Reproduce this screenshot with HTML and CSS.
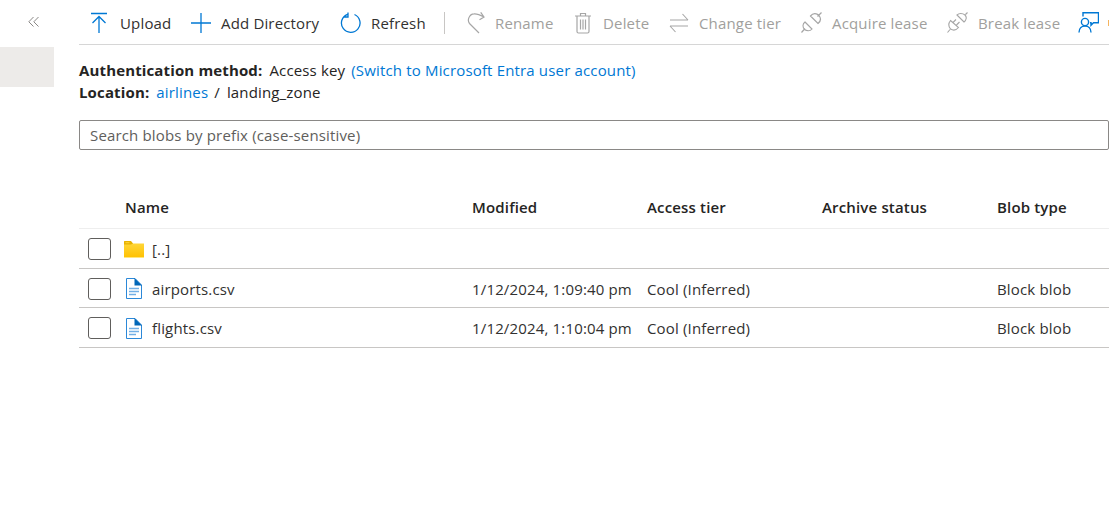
FILE: index.html
```html
<!DOCTYPE html>
<html lang="en">
<head>
<meta charset="utf-8">
<title>Blobs</title>
<link rel="stylesheet" href="styles.css">
</head>
<body>
<div class="page">
  <aside class="side">
    <div class="collapse"><svg width="12" height="12" viewBox="0 0 12 12"><path d="M5.500 1 .8 5.800l4.700 4.700M10.500 1 5.800 5.800l4.700 4.700" fill="none" stroke="#8a8886" stroke-width="1"/></svg></div>
    <div class="selected"></div>
  </aside>
  <main class="main">
    <div class="toolbar">
      <div class="tool t-upload"><svg width="18" height="22" viewBox="0 0 18 22"><path d="M1 1.500h16M9 21V4.500M2.500 11 9 4.500 15.500 11" fill="none" stroke="#0078d4" stroke-width="1.300"/></svg><span>Upload</span></div>
      <div class="tool t-add"><svg width="20" height="20" viewBox="0 0 20 20"><path d="M10 0v20M0 10h20" fill="none" stroke="#0078d4" stroke-width="1.300"/></svg><span>Add Directory</span></div>
      <div class="tool t-refresh"><svg width="22" height="22" viewBox="0 0 22 22"><path d="M7.500 2.300a9.300 9.300 0 1 0 7 .2M8 .5v4.500H3.500" fill="none" stroke="#0078d4" stroke-width="1.300"/></svg><span>Refresh</span></div>
      <div class="sep"></div>
      <div class="tool off t-rename"><svg width="20" height="22" viewBox="0 0 20 22"><path d="M13 21 3.500 11.500C1 8.500 3 2 8 1.800c4-.3 7 1.500 10 3.200M14.700.3 18 5l-4.500 2.700" fill="none" stroke="#a6a6a6" stroke-width="1.200"/></svg><span>Rename</span></div>
      <div class="tool off t-delete"><svg width="18" height="22" viewBox="0 0 18 22"><path d="M1 4h16M3 4v15.500a1.500 1.500 0 0 0 1.500 1.500h9a1.500 1.500 0 0 0 1.500-1.500V4M6.500 4V1.500h5V4M6.500 7.500v10M9 7.500v10M11.500 7.500v10" fill="none" stroke="#a6a6a6" stroke-width="1.200"/></svg><span>Delete</span></div>
      <div class="tool off t-tier"><svg width="20" height="20" viewBox="0 0 20 20"><path d="M1 7h18M13.500 1 19 7M19 13H1M6.500 19 1 13" fill="none" stroke="#a6a6a6" stroke-width="1.100"/></svg><span>Change tier</span></div>
      <div class="tool off t-acquire"><svg width="21" height="21" viewBox="0 0 21 21"><path d="M.5 20.500 4 16.500M16.500 4.500l4-4M4 10l7 7C9 19.500 5.500 19 3.500 17.500 1.500 15 1.500 12 4 10ZM9.500 4 17 11.500C20 9 20 6 18 3.500 15.500 1 12 1 9.500 4Z" fill="none" stroke="#a6a6a6" stroke-width="1.200"/></svg><span>Acquire lease</span></div>
      <div class="tool off t-break"><svg width="21" height="21" viewBox="0 0 21 21"><path d="M.5 20.500 3 17.500M18.500 2.500l2-2M10 3l7 7C19.500 8 20 5 18 3 15.500 1 12 1 10 3ZM3.500 8.500l8 7C9 18.500 6 18.500 3.500 17 1.500 14.500 1.500 11 3.500 8.500ZM6 10.500l3-3M9.500 13l3-3" fill="none" stroke="#a6a6a6" stroke-width="1.100"/></svg><span>Break lease</span></div>
      <div class="tool t-feedback"><svg width="21" height="21" viewBox="0 0 21 21"><path d="M5 4.500V.8h15.500v10h-5L13 13.300v-2.500h-1M1 20.500c0-4.500 3-6.500 6-6.500s6 2 6 6.500" fill="none" stroke="#0078d4" stroke-width="1.400"/><circle cx="7" cy="10" r="3.600" fill="none" stroke="#0078d4" stroke-width="1.400"/></svg></div>
      <div class="orange"></div>
    </div>
    <div class="meta">
      <div class="line"><b>Authentication method:</b><span>Access key</span><a class="link">(Switch to Microsoft Entra user account)</a></div>
      <div class="line"><b>Location:</b><a class="link">airlines</a><span class="slash">/</span><span>landing_zone</span></div>
    </div>
    <div class="search">Search blobs by prefix (case-sensitive)</div>
    <div class="grid head">
      <div></div>
      <div class="c-head">Name</div><div>Modified</div><div>Access tier</div><div>Archive status</div><div>Blob type</div>
    </div>
    <div class="grid row">
      <div class="check"></div>
      <svg class="icon" width="20" height="17" viewBox="0 0 20 17"><defs><linearGradient id="fold" x1="0" y1="0" x2="0" y2="1"><stop offset="0" stop-color="#ffd83d"/><stop offset="1" stop-color="#ffc000"/></linearGradient></defs><path d="M0 1h7l2 1.500h11V17H0Z" fill="url(#fold)"/><path d="M0 16h20v1H0Z" fill="#ffe680"/><path d="M0 .5a.5.500 0 0 1 .5-.5h6.500l2 2.500-2 1H0Z" fill="#e8b100"/><path d="M1.500 1.200h4v1h-4Z" fill="#ffd83d"/></svg>
      <div>[..]</div><div></div><div></div><div></div><div></div>
    </div>
    <div class="grid row">
      <div class="check"></div>
      <svg class="icon doc" width="18" height="21" viewBox="0 0 18 21"><path d="M1.500.5H10l6.500 6.500v13.500h-15Z" fill="#fff" stroke="#2b88d8"/><path d="M9.500 0l7.500 7.500H9.500Z" fill="#0067b8"/><path d="M4 10.500h10M4 13.500h10M4 16.500h7" stroke="#71afe5" stroke-width="1.400"/></svg>
      <div>airports.csv</div><div>1/12/2024, 1:09:40 pm</div><div>Cool (Inferred)</div><div></div><div>Block blob</div>
    </div>
    <div class="grid row">
      <div class="check"></div>
      <svg class="icon doc" width="18" height="21" viewBox="0 0 18 21"><path d="M1.500.5H10l6.500 6.500v13.500h-15Z" fill="#fff" stroke="#2b88d8"/><path d="M9.500 0l7.500 7.500H9.500Z" fill="#0067b8"/><path d="M4 10.500h10M4 13.500h10M4 16.500h7" stroke="#71afe5" stroke-width="1.400"/></svg>
      <div>flights.csv</div><div>1/12/2024, 1:10:04 pm</div><div>Cool (Inferred)</div><div></div><div>Block blob</div>
    </div>
  </main>
</div>
</body>
</html>
```
FILE: styles.css
```css
* { box-sizing: border-box; }
html, body { margin: 0; height: 100%; overflow: hidden; background: #fff; }
body { font-family: "Open Sans", "Noto Sans", "Liberation Sans", sans-serif; font-size: 15px; color: #323130; letter-spacing: 0.16px; }
.page { display: flex; height: 508px; width: 1109px; }
.side { width: 54px; flex: none; }
.collapse { height: 47px; padding: 16px 0 0 28px; }
.collapse svg { display: block; }
.selected { height: 40px; background: #edebe9; }
.main { margin-left: 25px; flex: 1; min-width: 0; }
.toolbar { display: flex; align-items: center; height: 45px; border-bottom: 1px solid #d6d6d6; padding-top: 1px; overflow: hidden; }
.tool { display: flex; align-items: center; flex: none; white-space: nowrap; }
.off { color: #a19f9d; }
.tool svg { display: block; flex: none; }
.t-upload { width: 112px; padding-left: 11px; }
.t-upload svg { margin-right: 12px; }
.t-add { width: 149px; }
.t-add svg { margin-right: 10px; }
.t-refresh { width: 104px; }
.t-refresh svg { margin-right: 9px; }
.sep { width: 1px; height: 22px; background: #c8c6c4; flex: none; }
.t-rename { width: 108px; margin-left: 21px; }
.t-rename svg { margin-right: 9px; }
.t-delete { width: 95px; }
.t-delete svg { margin-right: 11px; }
.t-tier { width: 132px; }
.t-tier svg { margin-right: 10px; }
.t-acquire { width: 146px; }
.t-acquire svg { margin-right: 10px; }
.t-break { width: 131px; }
.t-break svg { margin-right: 10px; }
.t-feedback { width: 30px; }
.orange { width: 1px; height: 6px; background: #f5b45e; }
.meta { padding-top: 14px; }
.line { display: flex; gap: 6px; height: 22px; line-height: 22px; color: #252423; }
.line b { font-weight: 700; letter-spacing: 0.14px; margin-right: 1px; }
.slash { margin-right: 1px; }
.link { color: #0078d4; }
.search { margin-top: 17px; height: 30px; line-height: 28px; padding-left: 10px; border: 1px solid #8a8886; border-radius: 2px; color: #605e5c; }
.grid { display: grid; grid-template-columns: 45px 28px 320px 175px 175px 175px 112px; align-items: center; white-space: nowrap; }
.head { margin-top: 36px; height: 43px; font-weight: 600; border-bottom: 1px solid #eee; color: #252423; }
.c-head { grid-column: 2 / span 2; margin-left: 1px; }
.row { height: 39.5px; padding-top: 2px; border-bottom: 1px solid #c8c6c4; }
.check { width: 23px; height: 22px; margin-left: 9px; border: 1px solid #605e5c; border-radius: 3px; }
.icon { display: block; }
.doc { margin-left: 1px; }
```
